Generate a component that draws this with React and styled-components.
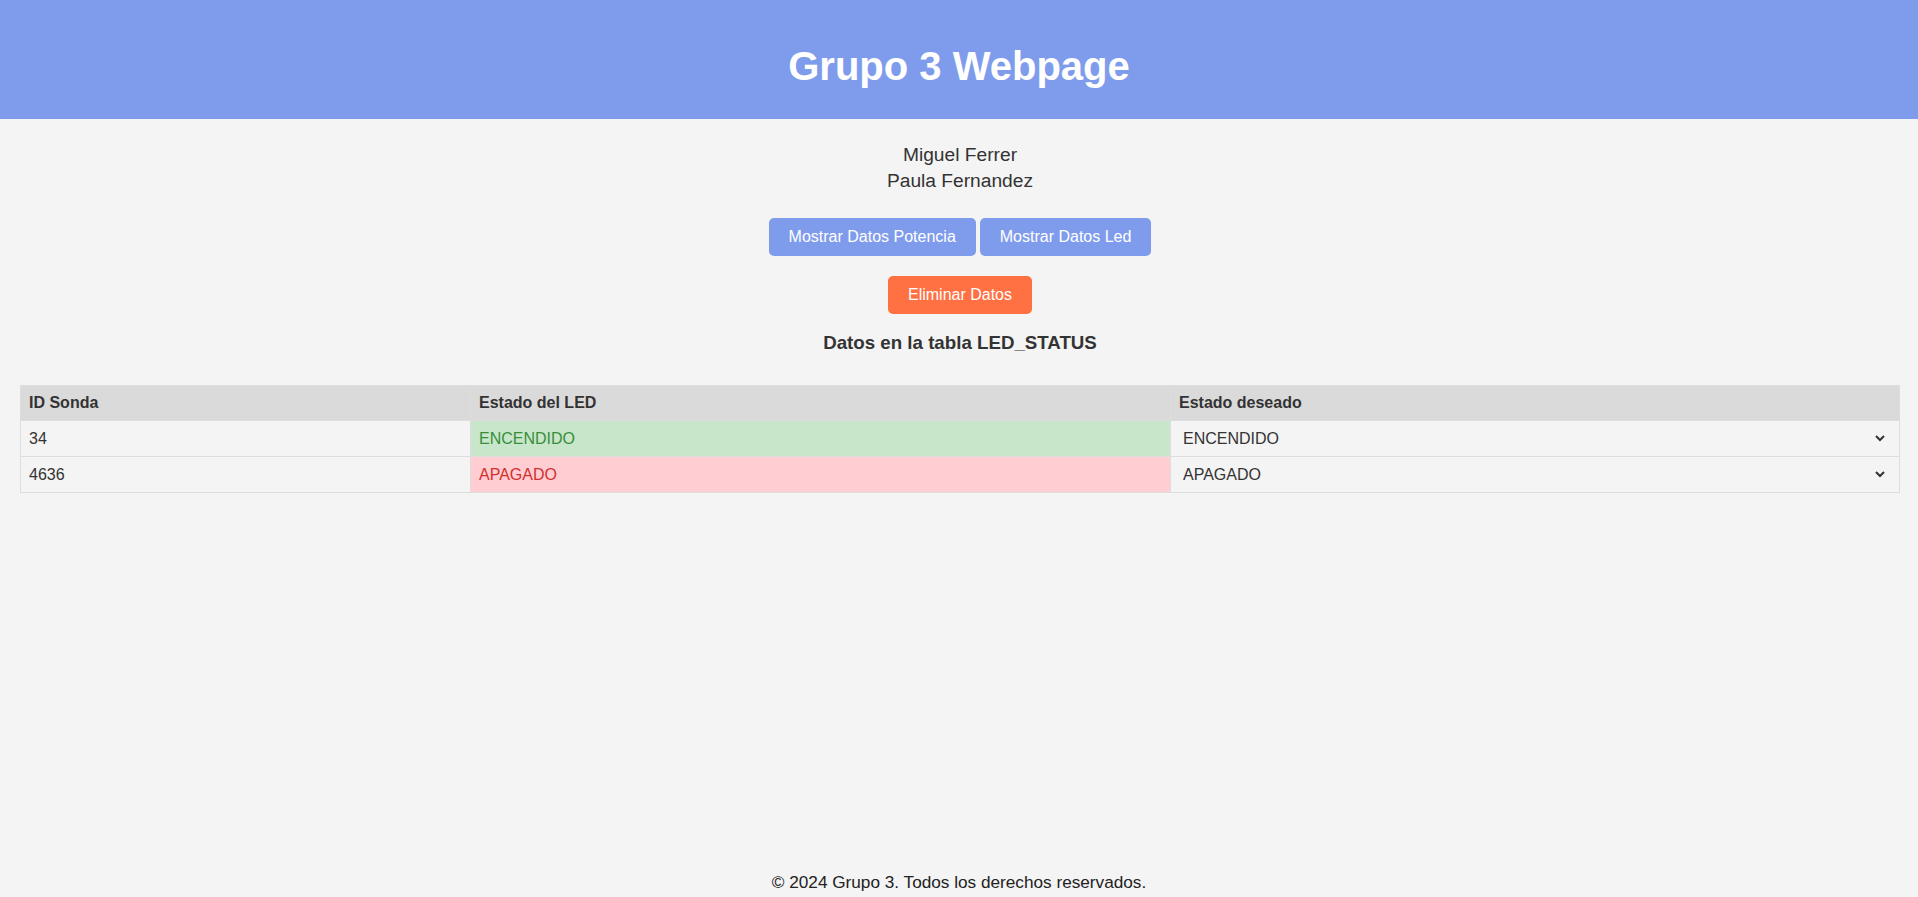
import styled, { createGlobalStyle } from 'styled-components';

const GlobalStyle = createGlobalStyle`
  html, body {
    margin: 0;
    padding: 0;
    background: #f4f4f4;
    font-family: 'Liberation Sans', Arial, sans-serif;
    color: #333;
  }
`;

const Page = styled.div`
  min-height: 100vh;
  display: flex;
  flex-direction: column;
`;

const Header = styled.header`
  background: #7f9cec;
  padding: 43px 0 30px;
  text-align: center;
  h1 {
    margin: 0;
    color: #fff;
    font-size: 40px;
    line-height: 46px;
    font-weight: bold;
  }
`;

const Main = styled.main`
  flex: 1;
  display: flex;
  flex-direction: column;
  align-items: center;
  padding: 23px 18px 0 20px;
`;

const Names = styled.div`
  text-align: center;
  font-size: 19.2px;
  line-height: 26px;
`;

const ButtonRow = styled.div`
  display: flex;
  justify-content: center;
  gap: 4px;
  margin-top: ${(p) => p.$top}px;
`;

const Button = styled.button`
  font-family: inherit;
  font-size: 16px;
  line-height: 18px;
  padding: 10px 20px;
  border: none;
  border-radius: 5px;
  color: #fff;
  background: ${(p) => (p.$danger ? '#ff7043' : '#7f9cec')};
  cursor: pointer;
`;

const Title = styled.h3`
  font-size: 18.72px;
  margin: 18px 0 0;
  color: #333;
`;

const Table = styled.table`
  width: 100%;
  margin-top: 31px;
  border-collapse: collapse;
  table-layout: fixed;
  font-size: 16px;
  th, td {
    border: 1px solid #ddd;
    padding: 8px;
    text-align: left;
    line-height: 18px;
  }
  th {
    background: #dadada;
    font-weight: bold;
    color: #333;
  }
`;

const StatusCell = styled.td`
  background: ${(p) => (p.$on ? '#c8e6c9' : '#ffcdd2')};
  color: ${(p) => (p.$on ? '#388e3c' : '#d32f2f')};
`;

const SelectCell = styled.td`
  && {
    padding: 8px 11px 8px 8px;
  }
`;

const Select = styled.select`
  width: 100%;
  height: 18px;
  border: none;
  background: transparent;
  font-family: inherit;
  font-size: 16px;
  color: #333;
  padding: 0;
  outline: none;
`;

const Footer = styled.footer`
  text-align: center;
  padding: 10px 0 4px;
  font-size: 17.2px;
  color: #222;
`;

const rows = [
  { id: 34, on: true },
  { id: 4636, on: false },
];

export default function App() {
  return (
    <Page>
      <GlobalStyle />
      <Header>
        <h1>Grupo 3 Webpage</h1>
      </Header>
      <Main>
        <Names>
          <div>Miguel Ferrer</div>
          <div>Paula Fernandez</div>
        </Names>
        <ButtonRow $top={24}>
          <Button>Mostrar Datos Potencia</Button>
          <Button>Mostrar Datos Led</Button>
        </ButtonRow>
        <ButtonRow $top={20}>
          <Button $danger>Eliminar Datos</Button>
        </ButtonRow>
        <Title>Datos en la tabla LED_STATUS</Title>
        <Table>
          <colgroup>
            <col style={{ width: '450px' }} />
            <col style={{ width: '700px' }} />
            <col />
          </colgroup>
          <thead>
            <tr>
              <th>ID Sonda</th>
              <th>Estado del LED</th>
              <th>Estado deseado</th>
            </tr>
          </thead>
          <tbody>
            {rows.map((r) => (
              <tr key={r.id}>
                <td>{r.id}</td>
                <StatusCell $on={r.on}>{r.on ? 'ENCENDIDO' : 'APAGADO'}</StatusCell>
                <SelectCell>
                  <Select defaultValue={r.on ? 'on' : 'off'}>
                    <option value="on">ENCENDIDO</option>
                    <option value="off">APAGADO</option>
                  </Select>
                </SelectCell>
              </tr>
            ))}
          </tbody>
        </Table>
      </Main>
      <Footer>© 2024 Grupo 3. Todos los derechos reservados.</Footer>
    </Page>
  );
}
